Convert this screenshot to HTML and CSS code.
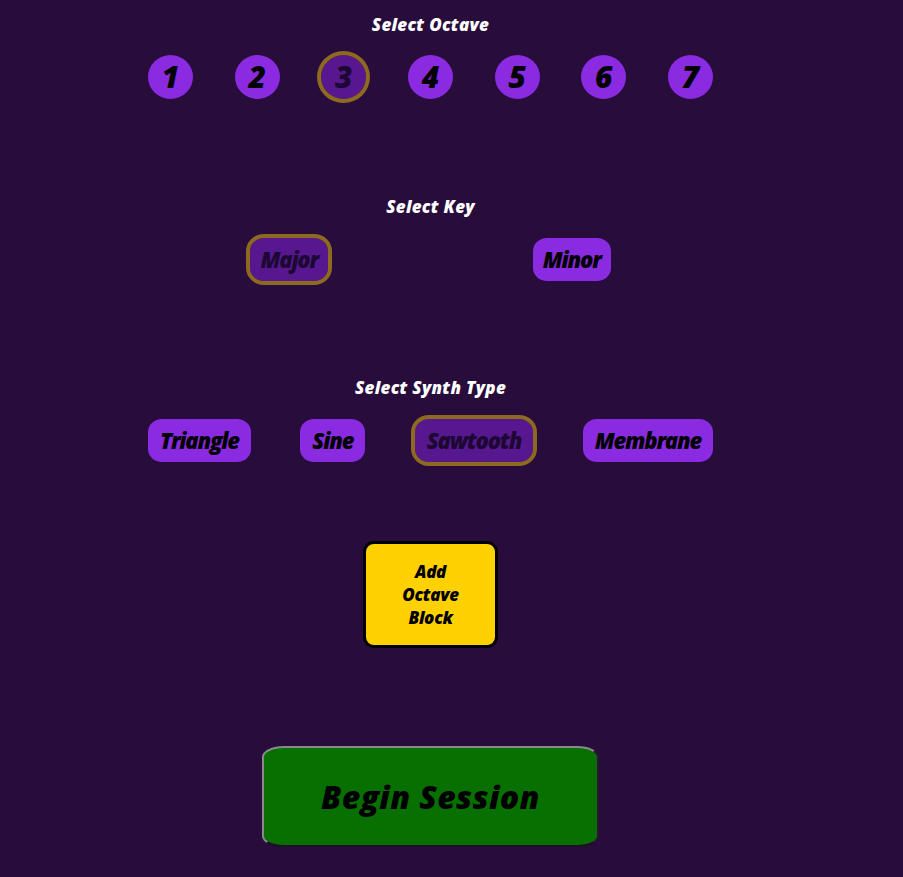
FILE: index.html
```html
<!DOCTYPE html>
<html lang="en">
<head>
<meta charset="utf-8">
<title>Synth Session Setup</title>
<link rel="stylesheet" href="styles.css">
</head>
<body>
<main class="app">
  <section class="group group-octave">
    <h2 class="title">Select Octave</h2>
    <div class="row row-between">
      <button class="pill circle">1</button>
      <button class="pill circle">2</button>
      <button class="pill circle selected">3</button>
      <button class="pill circle">4</button>
      <button class="pill circle">5</button>
      <button class="pill circle">6</button>
      <button class="pill circle">7</button>
    </div>
  </section>
  <section class="group group-key">
    <h2 class="title">Select Key</h2>
    <div class="row row-around">
      <button class="pill tag tag-key selected">Major</button>
      <button class="pill tag tag-key">Minor</button>
    </div>
  </section>
  <section class="group group-synth">
    <h2 class="title">Select Synth Type</h2>
    <div class="row row-between">
      <button class="pill tag tag-synth">Triangle</button>
      <button class="pill tag tag-synth">Sine</button>
      <button class="pill tag tag-synth selected">Sawtooth</button>
      <button class="pill tag tag-synth">Membrane</button>
    </div>
  </section>
  <div class="add-wrap">
    <button class="add-block"><span class="add-text">Add Octave Block</span></button>
  </div>
  <div class="begin-wrap">
    <button class="begin">Begin Session</button>
  </div>
</main>
</body>
</html>
```

FILE: styles.css
```css
html, body {
  margin: 0;
  padding: 0;
  background: #270c3c;
}

body {
  font-family: "Open Sans", "Lato", "DejaVu Sans", sans-serif;
  font-style: italic;
  font-weight: 800;
}

.app {
  width: 861px;
  display: flex;
  flex-direction: column;
  align-items: center;
}

button {
  font-family: inherit;
  font-style: italic;
  font-weight: 800;
  cursor: pointer;
  padding: 0;
  margin: 0;
}

.title {
  margin: 0;
  height: 20px;
  line-height: 20px;
  font-size: 17px;
  color: #ffffff;
  text-align: center;
  font-weight: 800;
  letter-spacing: 0.3px;
}

.group {
  display: flex;
  flex-direction: column;
  align-items: center;
  gap: 20px;
}

.group-octave { margin-top: 15px; }
.group-key { margin-top: 98px; gap: 21px; }
.group-synth { margin-top: 97px; gap: 21px; }

.row {
  width: 565px;
  display: flex;
  align-items: center;
}

.row-between { justify-content: space-between; }
.row-around { justify-content: space-around; }

.pill {
  background: #8a2be2;
  color: #000000;
  border: none;
}

.circle {
  width: 45px;
  height: 44px;
  border-radius: 50%;
  font-size: 30px;
  line-height: 44px;
}

.tag {
  height: 43px;
  border-radius: 14px / 13px;
  font-size: 22px;
  line-height: 43px;
  letter-spacing: -1.2px;
}

.tag-key {
  padding: 0 10px;
}

.tag-synth {
  padding: 0 12px;
}

.selected {
  background: #57188f;
  color: #1c0833;
  outline: 4px solid #8e6a20;
  outline-offset: 0;
}

.add-wrap {
  margin-top: 79px;
  display: flex;
  justify-content: center;
}

.add-block {
  width: 135px;
  height: 107px;
  box-sizing: border-box;
  background: #ffd100;
  border: 3px solid #000000;
  border-radius: 11px;
  color: #000000;
  font-size: 17px;
  line-height: 23px;
  letter-spacing: -0.3px;
  display: flex;
  align-items: center;
  justify-content: center;
}

.add-text {
  display: block;
  width: 70px;
  text-align: center;
}

.begin-wrap {
  margin-top: 98px;
  display: flex;
  justify-content: center;
}

.begin {
  width: 337px;
  height: 101px;
  box-sizing: border-box;
  background: #077000;
  color: #000000;
  border: 2px solid;
  border-color: #8a8a8a #2b1830 #1e0f25 #8a8a8a;
  border-radius: 22px / 11px;
  font-size: 32px;
  letter-spacing: 0.4px;
}
```
